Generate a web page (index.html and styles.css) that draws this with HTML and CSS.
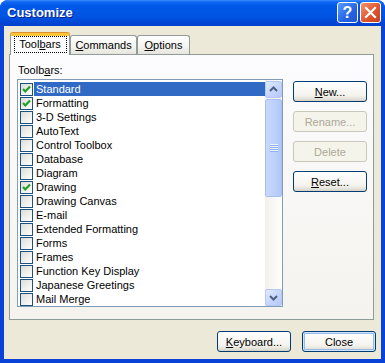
FILE: index.html
```html
<!DOCTYPE html>
<html lang="en">
<head>
    <meta charset="UTF-8">
    <title>Customize</title>
    <link rel="stylesheet" href="styles.css">
</head>
<body>
    <div class="window">
        <div class="titlebar">
            <span class="title">Customize</span>
            <div class="caption-buttons">
                <span class="cap-btn help">?</span>
                <span class="cap-btn close">
                    <svg width="19" height="19" viewBox="0 0 19 19"><path d="M5 5 L14 14 M14 5 L5 14" stroke="#fff" stroke-width="2.2" stroke-linecap="square"/></svg>
                </span>
            </div>
        </div>
        <div class="frame">
            <div class="tabs">
                <div class="tab active"><span class="focus">Tool<u>b</u>ars</span></div>
                <div class="tab commands"><u>C</u>ommands</div>
                <div class="tab options"><u>O</u>ptions</div>
            </div>
            <div class="panel">
                <div class="list-col">
                    <div class="label">Toolb<u>a</u>rs:</div>
                    <div class="listbox">
                        <div class="rows">
                            <div class="row selected"><span class="check on"><svg width="11" height="11" viewBox="0 0 11 11"><path d="M2 5 L4.3 7.5 L9 2.5" fill="none" stroke="#21A121" stroke-width="2.2"/></svg></span><span class="name">Standard</span></div>
                            <div class="row"><span class="check on"><svg width="11" height="11" viewBox="0 0 11 11"><path d="M2 5 L4.3 7.5 L9 2.5" fill="none" stroke="#21A121" stroke-width="2.2"/></svg></span><span class="name">Formatting</span></div>
                            <div class="row"><span class="check"></span><span class="name">3-D Settings</span></div>
                            <div class="row"><span class="check"></span><span class="name">AutoText</span></div>
                            <div class="row"><span class="check"></span><span class="name">Control Toolbox</span></div>
                            <div class="row"><span class="check"></span><span class="name">Database</span></div>
                            <div class="row"><span class="check"></span><span class="name">Diagram</span></div>
                            <div class="row"><span class="check on"><svg width="11" height="11" viewBox="0 0 11 11"><path d="M2 5 L4.3 7.5 L9 2.5" fill="none" stroke="#21A121" stroke-width="2.2"/></svg></span><span class="name">Drawing</span></div>
                            <div class="row"><span class="check"></span><span class="name">Drawing Canvas</span></div>
                            <div class="row"><span class="check"></span><span class="name">E-mail</span></div>
                            <div class="row"><span class="check"></span><span class="name">Extended Formatting</span></div>
                            <div class="row"><span class="check"></span><span class="name">Forms</span></div>
                            <div class="row"><span class="check"></span><span class="name">Frames</span></div>
                            <div class="row"><span class="check"></span><span class="name">Function Key Display</span></div>
                            <div class="row"><span class="check"></span><span class="name">Japanese Greetings</span></div>
                            <div class="row"><span class="check"></span><span class="name">Mail Merge</span></div>
                        </div>
                        <div class="scrollbar">
                            <div class="sb-btn">
                                <svg width="15" height="15" viewBox="0 0 15 15"><path d="M4 9 L7.5 5.5 L11 9" fill="none" stroke="#4D6185" stroke-width="2"/></svg>
                            </div>
                            <div class="sb-track">
                                <div class="sb-thumb">
                                    <svg width="8" height="8" viewBox="0 0 8 8">
                                        <rect x="0" y="0" width="8" height="1" fill="#EEF4FE"/>
                                        <rect x="0" y="1" width="8" height="1" fill="#8CB0F8"/>
                                        <rect x="0" y="2" width="8" height="1" fill="#EEF4FE"/>
                                        <rect x="0" y="3" width="8" height="1" fill="#8CB0F8"/>
                                        <rect x="0" y="4" width="8" height="1" fill="#EEF4FE"/>
                                        <rect x="0" y="5" width="8" height="1" fill="#8CB0F8"/>
                                        <rect x="0" y="6" width="8" height="1" fill="#EEF4FE"/>
                                        <rect x="0" y="7" width="8" height="1" fill="#8CB0F8"/>
                                    </svg>
                                </div>
                            </div>
                            <div class="sb-btn">
                                <svg width="15" height="15" viewBox="0 0 15 15"><path d="M4 6 L7.5 9.5 L11 6" fill="none" stroke="#4D6185" stroke-width="2"/></svg>
                            </div>
                        </div>
                    </div>
                </div>
                <div class="side-buttons">
                    <button class="btn"><u>N</u>ew...</button>
                    <button class="btn" disabled>Rename...</button>
                    <button class="btn" disabled>Delete</button>
                    <button class="btn"><u>R</u>eset...</button>
                </div>
            </div>
            <div class="footer">
                <button class="btn"><u>K</u>eyboard...</button>
                <button class="btn default">Close</button>
            </div>
        </div>
    </div>
</body>
</html>
```

FILE: styles.css
```css
body {
    margin: 0;
    font-family: "Liberation Sans", Arial, sans-serif;
    font-size: 11px;
    background: #fff;
}
.window {
    width: 385px;
    height: 363px;
    display: flex;
    flex-direction: column;
    background: #0842D6;
    border-radius: 8px 8px 0 0;
    overflow: hidden;
}
.titlebar {
    height: 26px;
    flex: none;
    display: flex;
    justify-content: space-between;
    padding: 0 4px 0 7px;
    background: linear-gradient(#3D8DFF 0, #0E66F2 2px, #0058E8 6px, #0054E3 16px, #0048D6 22px, #0040C8 26px);
}
.title {
    color: #fff;
    font-weight: bold;
    font-size: 13px;
    line-height: 26px;
    text-shadow: 1px 1px #0A1E8C;
}
.caption-buttons {
    display: flex;
    gap: 2px;
    padding-top: 2px;
}
.cap-btn {
    width: 21px;
    height: 21px;
    box-sizing: border-box;
    border: 1px solid #fff;
    border-radius: 3px;
    display: flex;
    align-items: center;
    justify-content: center;
}
.help {
    background: linear-gradient(135deg, #5A9CFF, #2463E3 60%, #1F55D0);
    color: #fff;
    font-weight: bold;
    font-size: 16px;
}
.close {
    background: linear-gradient(135deg, #F2946F, #E2552C 55%, #C8401B);
}
.frame {
    flex: 1;
    margin: 0 4px 4px 4px;
    background: #ECE9D8;
    padding: 7px 5px 7px 5px;
    display: flex;
    flex-direction: column;
}
.tabs {
    height: 21px;
    display: flex;
    align-items: flex-end;
    padding-left: 1px;
    margin-right: 2px;
}
.tab {
    box-sizing: border-box;
    height: 19px;
    border: 1px solid #919B9C;
    border-bottom: none;
    border-radius: 3px 3px 0 0;
    background: linear-gradient(#FFFFFF, #F3F3EF 60%, #E6E5DD);
    text-align: center;
    line-height: 18px;
    color: #000;
}
.tab.active {
    width: 60px;
    height: 22px;
    margin-bottom: -1px;
    position: relative;
    z-index: 1;
    border-top: 3px solid #FFC83C;
    box-shadow: 0 -1px 0 #E68B2C;
    background: #FCFCFE;
    padding-top: 0;
    line-height: 17px;
}
.tab.commands {
    width: 67px;
}
.tab.options {
    width: 53px;
}
.focus {
    display: inline-block;
    width: 53px;
    height: 17px;
    box-sizing: border-box;
    outline: 1px dotted #000;
    outline-offset: -1px;
    line-height: 17px;
}
.panel {
    height: 266px;
    box-sizing: border-box;
    margin-right: 2px;
    border: 1px solid #919B9C;
    background: linear-gradient(#FCFCFE, #F4F3EE);
    padding: 9px 0 0 7px;
    display: flex;
    gap: 10px;
}
.label {
    line-height: 13px;
    margin: 0 0 2px 1px;
}
.listbox {
    width: 266px;
    height: 228px;
    box-sizing: border-box;
    border: 1px solid #7F9DB9;
    background: #fff;
    display: flex;
}
.rows {
    flex: 1;
    padding-top: 2px;
}
.row {
    height: 14px;
    display: flex;
    align-items: center;
    padding-left: 2px;
}
.check {
    width: 13px;
    height: 13px;
    box-sizing: border-box;
    border: 1px solid #1C5180;
    background: linear-gradient(135deg, #DCDCD7, #FFFFFF);
    display: flex;
    align-items: center;
    justify-content: center;
}
.name {
    flex: 1;
    margin-left: 1px;
    padding-left: 2px;
    line-height: 14px;
    white-space: nowrap;
}
.row.selected .name {
    background: #316AC5;
    color: #fff;
}
.scrollbar {
    width: 17px;
    display: flex;
    flex-direction: column;
    padding: 1px 0 0 0;
    background: linear-gradient(to right, #F3F1EC, #FEFEFB);
}
.sb-btn {
    height: 17px;
    box-sizing: border-box;
    border: 1px solid #B4C8F6;
    border-radius: 2px;
    background: linear-gradient(135deg, #E1EAFE, #C3D3FD 60%, #B6CAF7);
    display: flex;
    align-items: center;
    justify-content: center;
}
.sb-track {
    flex: 1;
    padding: 1px 0 0 0;
}
.sb-thumb {
    height: 98px;
    box-sizing: border-box;
    border: 1px solid #A8BFF3;
    border-radius: 2px;
    background: linear-gradient(to right, #C9D8FC, #BCD0FA 60%, #B1C7F7);
    display: flex;
    align-items: center;
    justify-content: center;
}
.side-buttons {
    padding-top: 17px;
    display: flex;
    flex-direction: column;
    gap: 9px;
}
.btn {
    width: 74px;
    height: 21px;
    padding: 0;
    border: 1px solid #003C74;
    border-radius: 3px;
    background: linear-gradient(#FFFFFF, #F4F3EE 70%, #E3E0D6 90%, #D6D0C5);
    font-family: "Liberation Sans", Arial, sans-serif;
    font-size: 11px;
    color: #000;
}
.btn:disabled {
    border-color: #C9C7BA;
    background: #F5F4EA;
    color: #ACA899;
}
.btn.default {
    box-shadow: inset 0 0 0 1px #CEE7FF, inset 0 0 0 2px #98B8EA;
}
.footer {
    margin-top: 11px;
    display: flex;
    justify-content: flex-end;
    gap: 11px;
}
```
